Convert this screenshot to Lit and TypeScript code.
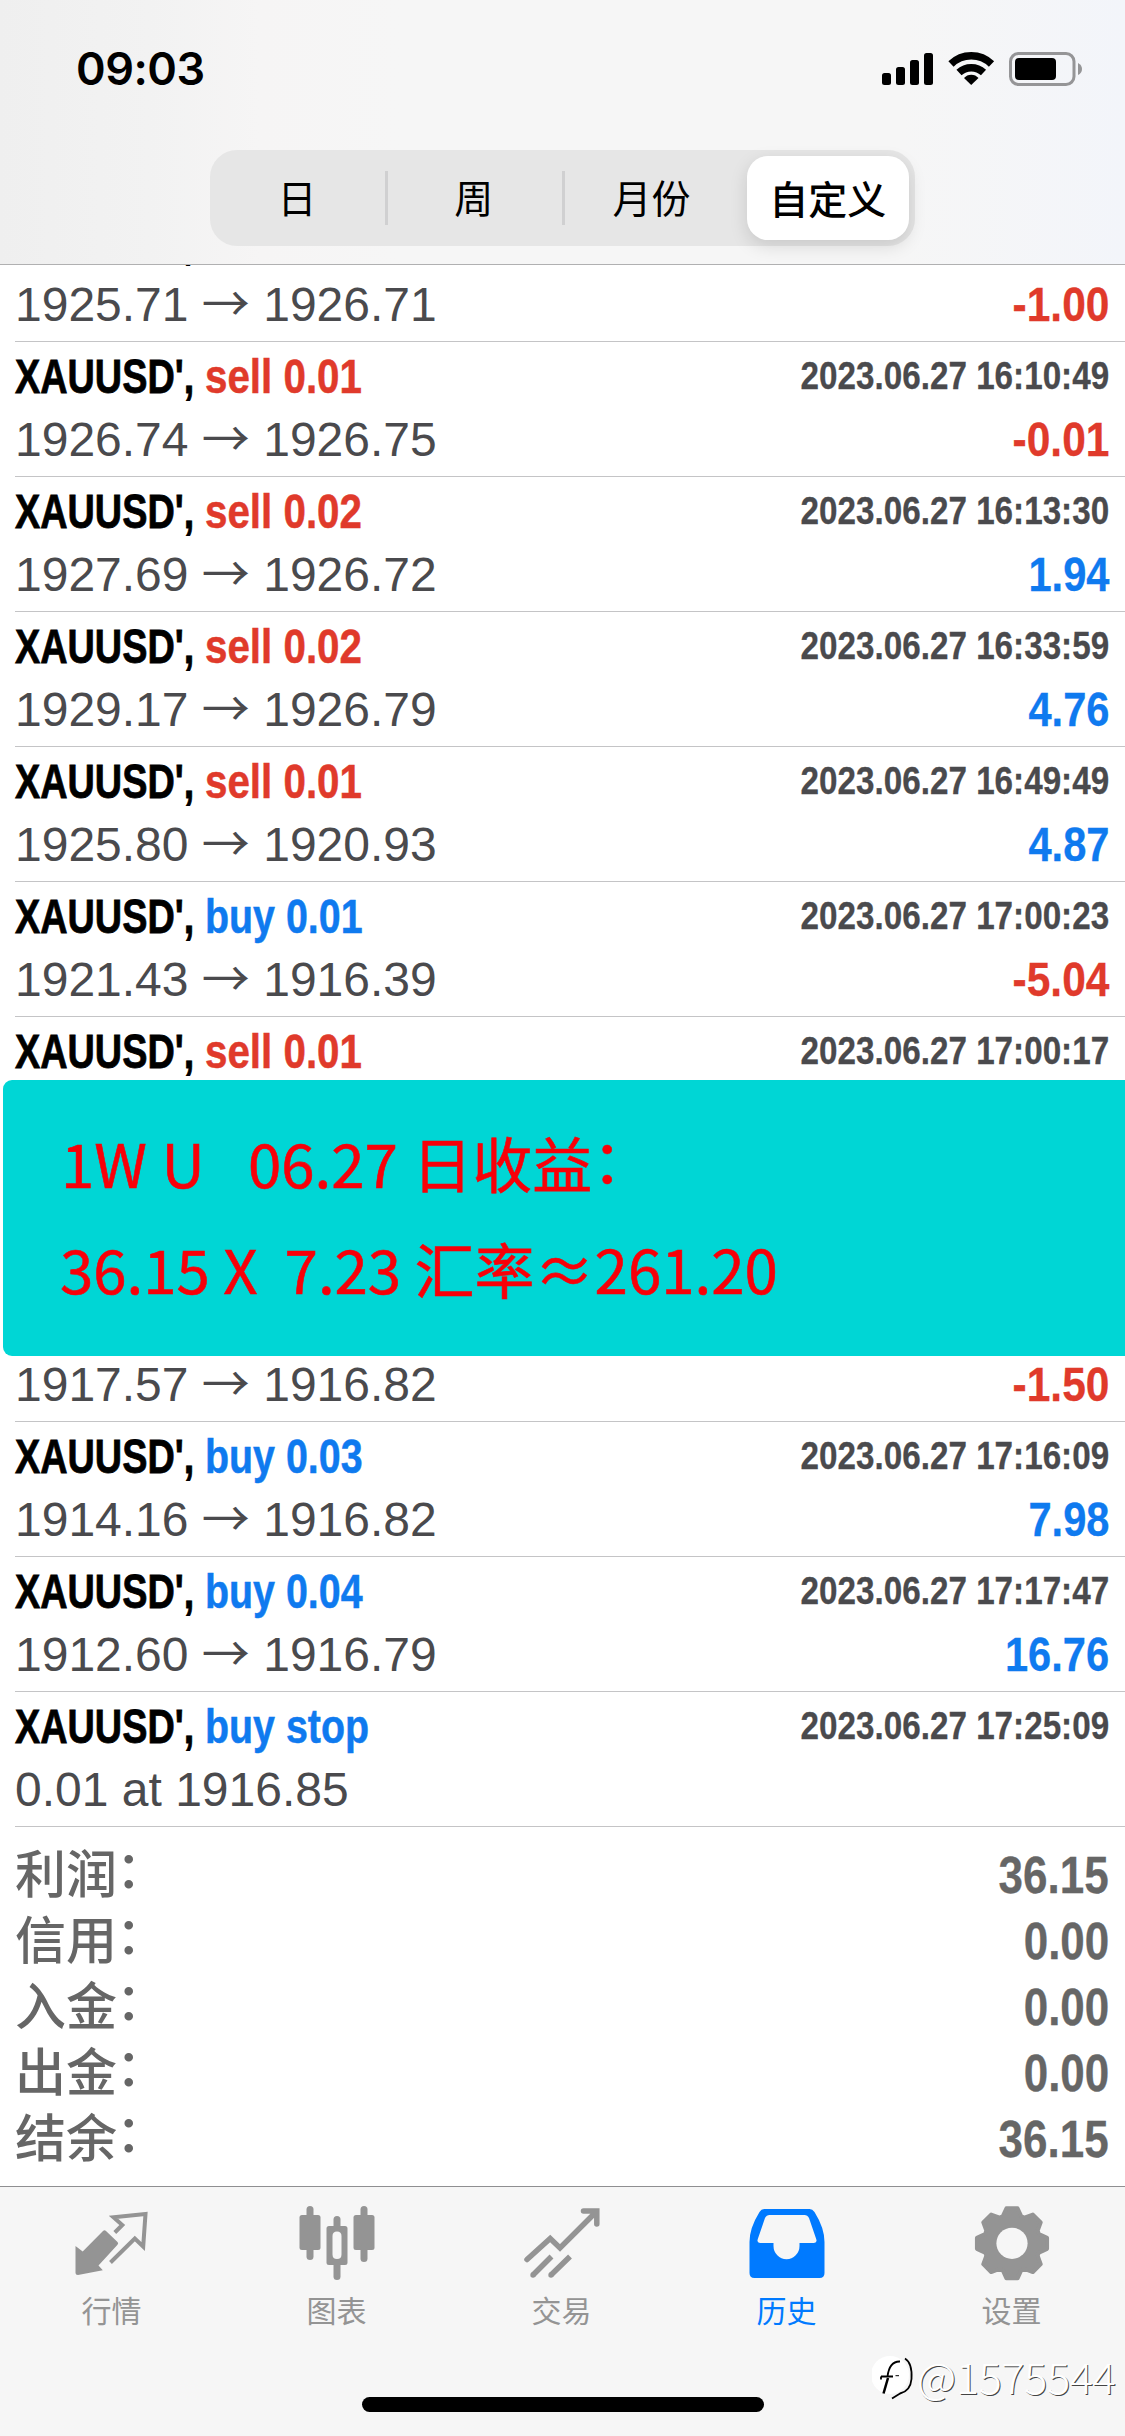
import { LitElement, html, css, svg, nothing } from "lit";
import { customElement } from "lit/decorators.js";

interface Deal { side: "sell" | "buy"; action: string; time: string; detail: string[]; profit: string; }

const deals: (Deal | null)[] = [
  { side: "sell", action: "", time: "", detail: ["1925.71", "1926.71"], profit: "-1.00" },
  { side: "sell", action: "sell 0.01", time: "2023.06.27 16:10:49", detail: ["1926.74", "1926.75"], profit: "-0.01" },
  { side: "sell", action: "sell 0.02", time: "2023.06.27 16:13:30", detail: ["1927.69", "1926.72"], profit: "1.94" },
  { side: "sell", action: "sell 0.02", time: "2023.06.27 16:33:59", detail: ["1929.17", "1926.79"], profit: "4.76" },
  { side: "sell", action: "sell 0.01", time: "2023.06.27 16:49:49", detail: ["1925.80", "1920.93"], profit: "4.87" },
  { side: "buy", action: "buy 0.01", time: "2023.06.27 17:00:23", detail: ["1921.43", "1916.39"], profit: "-5.04" },
  { side: "sell", action: "sell 0.01", time: "2023.06.27 17:00:17", detail: [], profit: "" },
  null,
  { side: "buy", action: "", time: "", detail: ["1917.57", "1916.82"], profit: "-1.50" },
  { side: "buy", action: "buy 0.03", time: "2023.06.27 17:16:09", detail: ["1914.16", "1916.82"], profit: "7.98" },
  { side: "buy", action: "buy 0.04", time: "2023.06.27 17:17:47", detail: ["1912.60", "1916.79"], profit: "16.76" },
  { side: "buy", action: "buy stop", time: "2023.06.27 17:25:09", detail: ["0.01 at 1916.85"], profit: "" },
];

const totals = [["利润", "36.15"], ["信用", "0.00"], ["入金", "0.00"], ["出金", "0.00"], ["结余", "36.15"]];

function gearPath(cx: number, cy: number) {
  const pts: string[] = [];
  for (let k = 0; k < 8; k++) {
    for (const [r, d] of [[28.5, -19], [35.5, -9], [35.5, 9], [28.5, 19]]) {
      const a = ((k * 45 + d) * Math.PI) / 180;
      pts.push(`${(cx + r * Math.sin(a)).toFixed(2)},${(cy - r * Math.cos(a)).toFixed(2)}`);
    }
  }
  return pts.join(" ");
}

const icons = {
  quotes: svg`<path fill="currentColor" d="M75 2246L82.2 2251.5L102.5 2231Q104 2229.500 105.500 2231L117 2242Q118.300 2243.300 117 2244.700L98 2265.500L102.300 2270.300L77.500 2275Q75 2275 75 2272.500Z"/>
    <path fill="none" stroke="currentColor" stroke-width="4" d="M114.300 2232.500L121.800 2225L113 2217.200L145 2214L142.700 2246.500L134.300 2238.500L110 2262.500"/>`,
  charts: svg`<g fill="currentColor"><rect x="299" y="2215" width="21" height="35" rx="2.500"/><rect x="306" y="2206" width="7" height="54" rx="3.500"/>
    <rect x="353" y="2215" width="21" height="35" rx="2.500"/><rect x="360" y="2206" width="7" height="56" rx="3.500"/>
    <rect x="333" y="2216" width="7" height="14" rx="3.500"/><rect x="333" y="2260" width="7" height="20" rx="3.500"/>
    <path fill-rule="evenodd" d="M328.500 2226h16a2.500 2.500 0 0 1 2.500 2.500v34a2.500 2.500 0 0 1-2.500 2.500h-16a2.500 2.500 0 0 1-2.500-2.500v-34a2.500 2.500 0 0 1 2.500-2.500zM336.500 2231.500q-4.500 0-4.500 4.500v18.500q0 4.500 4.500 4.500t4.500-4.500v-18.500q0-4.500-4.500-4.500z"/></g>`,
  trade: svg`<g fill="none" stroke="currentColor" stroke-width="5.500"><path stroke-linecap="round" d="M526.500 2259.500L549.700 2238.500L559.500 2248L595 2212.500M583 2211h13.300v13"/>
    <path d="M532.500 2275L551 2256.500M550.500 2275L569.500 2256.500"/></g><circle cx="532.500" cy="2275" r="2.700" fill="currentColor"/><circle cx="550.500" cy="2275" r="2.700" fill="currentColor"/>`,
  history: svg`<path fill="currentColor" fill-rule="evenodd" d="M764 2209H809Q812 2209 814 2212Q824 2228 824 2242V2273Q824 2278 819 2278H754Q749 2278 749 2273V2242Q749 2228 759 2212Q761 2209 764 2209ZM769 2215Q766 2215 764.500 2218L757.300 2239Q756 2243 759.500 2243H773V2246A13 13.200 0 0 0 799 2246V2243H813.500Q817 2243 815.700 2239L808.500 2218Q807 2215 804 2215Z"/>`,
  settings: svg`<polygon points="${gearPath(1011.5, 2243.3)}" fill="currentColor" stroke="currentColor" stroke-width="4" stroke-linejoin="round"/><circle cx="1011.500" cy="2243.300" r="15.600" fill="#f6f6f6"/>`,
};

const tabs = [
  { label: "行情", icon: icons.quotes, on: false }, { label: "图表", icon: icons.charts, on: false },
  { label: "交易", icon: icons.trade, on: false }, { label: "历史", icon: icons.history, on: true },
  { label: "设置", icon: icons.settings, on: false },
];

@customElement("app-root")
export class AppRoot extends LitElement {
  static styles = css`
    :host { display: block; width: 1125px; height: 2436px; overflow: hidden; background: #fff; position: relative;
      font-family: "Liberation Sans", "Noto Sans CJK SC", sans-serif; }
    * { box-sizing: border-box; }
    .page { display: flex; flex-direction: column; height: 2436px; }
    .top { height: 265px; flex: none; border-bottom: 1px solid #b0b0b1; display: flex; flex-direction: column; align-items: center;
      background: linear-gradient(90deg, #efefef 0, #f2f2f2 150px, #f6f5f5 260px, #f6f6f6 400px, #f6f6f6 900px, #f3f5fa 1125px); }
    .status { width: 100%; height: 150px; display: flex; justify-content: space-between; padding: 42px 43px 0 76px; }
    .clock { font: 600 45px/54px Inter, sans-serif; letter-spacing: -0.5px; color: #000; }
    .sys { display: block; width: 202px; height: 40px; margin-top: 6px; }
    .segments { width: 705px; height: 96px; border-radius: 27px; background: #e6e6e6; display: grid; grid-template-columns: repeat(4, 1fr); }
    .seg { display: flex; align-items: center; justify-content: center; font: 400 39px/54px "Noto Sans CJK SC", sans-serif; color: #000;
      margin: 21px 0; height: 54px; border-left: 3px solid transparent; padding: 0 5px 4px 0; }
    .seg.line { border-left-color: #d0d0d1; margin-left: -1px; padding-right: 3px; }
    .seg.wide { padding-right: 0; }
    .seg.on { margin: 6px 6px 6px 8px; height: 84px; border: 0; padding: 0 0 3px; border-radius: 21px; background: #fff; font-weight: 500; box-shadow: 0 6px 18px rgba(0,0,0,.13); }
    .list { height: 1921px; flex: none; overflow: hidden; display: flex; flex-direction: column; }
    .deals { margin-top: -58px; padding-left: 15px; flex: none; display: flex; flex-direction: column; }
    .deal { height: 135px; border-bottom: 1px solid #c4c4c6; display: flex; flex-direction: column; padding: 3px 16px 0 0; }
    .line1, .line2 { display: flex; justify-content: space-between; height: 63px; line-height: 63px; white-space: pre; }
    .title { display: flex; }
    .cond { display: block; font-weight: 700; font-size: 48px; transform-origin: 0 50%; -webkit-text-stroke: .3px currentColor; }
    .symbol { width: 190px; transform: scaleX(.788); -webkit-text-stroke: .8px currentColor; }
    .action { transform: scaleX(.84); -webkit-text-stroke: .5px currentColor; }
    .action.buy { transform: scaleX(.82); }
    .time { font-size: 39px; line-height: 62px; color: #4a4a4d; transform: scaleX(.852); transform-origin: 100% 50%; }
    .profit { transform: scaleX(.867); transform-origin: 100% 50%; }
    .profit.neg { transform: scaleX(.885); }
    .price { font-size: 48px; color: #4a4a4d; }
    .arrow { font-family: "Noto Sans CJK SC", sans-serif; line-height: 1; }
    .sell, .neg { color: #e03a2b; }
    .buy, .pos { color: #0f7aef; }
    .totals { display: flex; flex-direction: column; padding: 16px 16px 0 15px; color: #666; }
    .total { height: 66px; display: flex; justify-content: space-between; line-height: 66px; }
    .name { font-weight: 500; font-size: 51px; }
    .colon { margin-left: -1px; vertical-align: 5px; line-height: 0; }
    .sum { font-size: 51px; transform: scaleX(.862); transform-origin: 100% 50%; }
    .tabs { flex: 1; border-top: 1px solid #8f8f91; background: #f6f6f6; display: flex; flex-direction: column; align-items: center; }
    .tabrow { width: 100%; height: 210px; display: grid; grid-template-columns: repeat(5, 225px); }
    .tab { display: flex; flex-direction: column; align-items: center; color: #949494; padding-top: 16px; }
    .tab.on { color: #007aff; }
    .icon { width: 80px; height: 80px; display: block; }
    .label { font: 400 30px/44px "Noto Sans CJK SC", sans-serif; margin: 4px 2px 0 0; }
    .home { width: 402px; height: 15px; border-radius: 8px; background: #000; }
    .note { position: absolute; left: 3px; top: 1080px; width: 1130px; height: 276px; border-radius: 9px; background: #00d6d5; color: #f80008;
      padding: 29px 0 0 57px; font: 400 60px/106px "Noto Sans CJK SC", sans-serif; white-space: pre; -webkit-text-stroke: .6px #f80008; }
    .lead { word-spacing: 1px; padding-left: 1px; }
    .raise { vertical-align: 4px; line-height: 0; }
    .mark { position: absolute; left: 872px; top: 2345px; display: flex; align-items: flex-start; gap: 3px; font: 300 43px/60px "Noto Sans CJK SC", sans-serif;
      letter-spacing: -.2px; color: #fff; text-shadow: 1px 1px 0 #444; }
    .logo { width: 42px; height: 46px; display: block; margin-top: 10px; }
  `;

  private deal(d: Deal | null) {
    if (!d) return html`<div class="deal"></div>`;
    return html`<div class="deal">
      <div class="line1"><span class="title"><span class="cond symbol">XAUUSD', </span>${d.action ? html`<span class="cond action ${d.side}">${d.action}</span>` : nothing}</span>${d.time ? html`<span class="cond time">${d.time}</span>` : nothing}</div>
      <div class="line2"><span class="price">${d.detail.map((p, i) => (i ? html` <span class="arrow">→</span> ${p}` : p))}</span>${d.profit ? html`<span class="cond profit ${d.profit.startsWith("-") ? "neg" : "pos"}">${d.profit}</span>` : nothing}</div>
    </div>`;
  }

  render() {
    return html`<div class="page">
      <header class="top">
        <div class="status"><span class="clock">09:03</span>
          <svg class="sys" viewBox="880 48 202 40">
            <rect x="882" y="73" width="9" height="12" rx="2.500"/><rect x="896" y="67" width="9" height="18" rx="2.500"/>
            <rect x="910" y="60" width="9" height="25" rx="2.500"/><rect x="924" y="53" width="9" height="32" rx="2.500"/>
            <g fill="none" stroke="#000" stroke-width="7.500"><path d="M951 64A29 29 0 0 1 991.500 64"/><path d="M959 72.500A18 18 0 0 1 983.500 72.500"/></g>
            <path d="M971.200 85L964 78A9.500 9.500 0 0 1 978.500 78Z"/>
            <rect x="1010.500" y="53.500" width="63.500" height="31" rx="8" fill="none" stroke="#959597" stroke-width="3"/>
            <rect x="1015" y="58" width="41" height="22" rx="4"/><path d="M1078 63Q1082 65 1082 69T1078 75Z" fill="#959597"/>
          </svg></div>
        <div class="segments"><span class="seg">日</span><span class="seg line">周</span><span class="seg line wide">月份</span><span class="seg on">自定义</span></div>
      </header>
      <main class="list">
        <div class="deals">${deals.map((d) => this.deal(d))}</div>
        <div class="totals">${totals.map(([n, v]) => html`<div class="total"><span class="name">${n}<span class="colon">：</span></span><span class="cond sum">${v}</span></div>`)}</div>
      </main>
      <nav class="tabs">
        <div class="tabrow">${tabs.map((t, i) => html`<div class="tab ${t.on ? "on" : ""}">
          <svg class="icon" viewBox="${72.5 + i * 225} 2203 80 80">${t.icon}</svg><span class="label">${t.label}</span></div>`)}</div>
        <div class="home"></div>
      </nav>
    </div>
    <aside class="note"><div class="lead">1W U   06.27 日收益<span class="raise">：</span></div><div>36.15 X  7.23 汇率≈261.20</div></aside>
    <div class="mark"><svg class="logo" viewBox="0 0 42 46"><circle cx="18" cy="20" r="19" fill="#fff"/>
      <g fill="none" stroke="#000"><path stroke-width="1.800" d="M28 6.500Q17.500 6 15.500 21.500M9 21.500H21M9 21.500v3M33 3.500Q40.500 8 39.500 24Q38.500 36 28 38.500L20 43.500"/>
      <path stroke-width="2.500" d="M16 23L11.500 38.500"/><path stroke-width="1" d="M23.500 20.700h3.500"/></g></svg><span>@1575544</span></div>`;
  }
}
